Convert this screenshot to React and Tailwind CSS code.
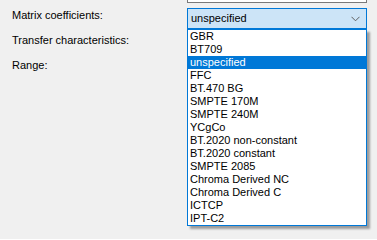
import React from "react";

const options = [
  "GBR",
  "BT709",
  "unspecified",
  "FFC",
  "BT.470 BG",
  "SMPTE 170M",
  "SMPTE 240M",
  "YCgCo",
  "BT.2020 non-constant",
  "BT.2020 constant",
  "SMPTE 2085",
  "Chroma Derived NC",
  "Chroma Derived C",
  "ICTCP",
  "IPT-C2",
];

const Chevron = () => (
  <svg width="9" height="6" viewBox="0 0 9 6" className="mr-[6px]">
    <path d="M0.5 0.8 L4.5 4.8 L8.5 0.8" fill="none" stroke="#5f5f5f" strokeWidth="1" />
  </svg>
);

export default function App() {
  return (
    <div className="relative w-[377px] h-[239px] overflow-hidden bg-[#f0f0f0] text-[11.5px] text-black font-['Liberation_Sans',Arial,sans-serif]">
      <div className="flex">
        {/* labels */}
        <div className="w-[187px] pl-[12px] pt-[8px] flex flex-col gap-[10px]">
          <div className="h-[15px] leading-[15px] text-[11px]">Matrix coefficients:</div>
          <div className="h-[15px] leading-[15px] text-[11px]">Transfer characteristics:</div>
          <div className="h-[15px] leading-[15px] text-[11px]">Range:</div>
        </div>

        {/* fields */}
        <div className="w-[180px] flex flex-col">
          <div className="h-[21px] -mt-[18px] border border-[#7a7a7a] bg-white" />
          <div className="mt-[5px] h-[21px] border border-[#0078d7] bg-[#cce4f7] flex items-center justify-between pl-[3px]">
            <span className="leading-[15px] text-[11px]">unspecified</span>
            <Chevron />
          </div>
        </div>
      </div>

      {/* open list */}
      <div className="absolute top-[29px] left-[187px] w-[180px] border border-[#0078d7] bg-white text-[11px] shadow-[3px_3px_2px_rgba(0,0,0,0.35)]">
        {options.map((o) => (
          <div
            key={o}
            className={
              o === "unspecified"
                ? "h-[13px] leading-[13px] pl-[2px] bg-[#0078d7] text-white"
                : "h-[13px] leading-[13px] pl-[2px]"
            }
          >
            {o}
          </div>
        ))}
      </div>
    </div>
  );
}
